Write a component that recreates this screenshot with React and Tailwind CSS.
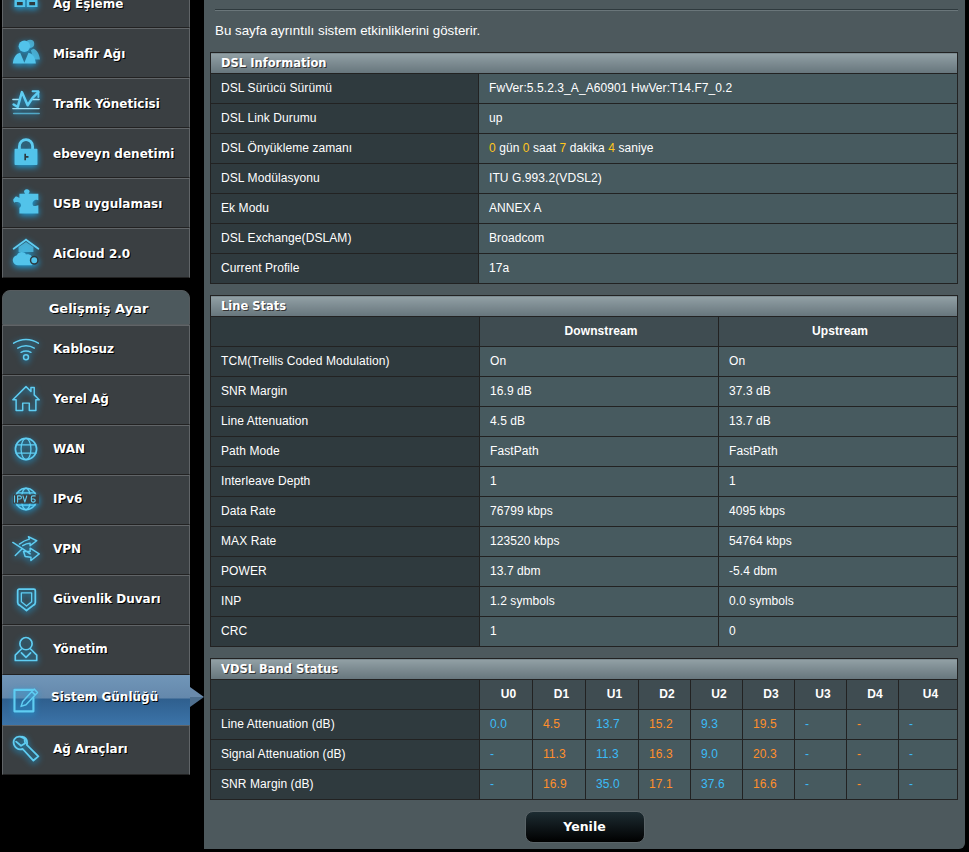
const glow = "shrink-0 drop-shadow-[0_2px_3px_#1b9fdc]";
const S = ({ children, size = 28 }) => (
  <span className="flex w-[28px] justify-center">
    <svg width={size} height={size} viewBox="0 0 34 34" fill="none" stroke="#5fcdf2" strokeWidth="1.8" strokeLinejoin="round" strokeLinecap="round" className={glow}>{children}</svg>
  </span>
);
const F = "#52c3ea";
const icons = {
  map: <S><g fill={F} stroke="none"><path d="M12 2h10v7h-10zM3 14h13v9H3zM18 14h13v9H18z" /><path d="M16 9h2v3h9v2H7v-2h9z" /></g><path d="M6 17h7v4H6zM21 17h7v4h-7z" fill="#2d3a40" stroke="none" /></S>,
  guest: <S><g fill={F} stroke="none"><circle cx="22" cy="7" r="5" opacity=".75" /><path d="M26 13c4 1 7 6 8 13h-8l-3-11z" opacity=".75" /><circle cx="15" cy="10" r="7" /><path d="M1 31c1-8 4-12 9-13l5 12 5-12c5 1 8 5 9 13z" /></g></S>,
  traffic: <S><path d="M1 14h7M24 14h9M1 25h32" stroke="#9fe1f7" strokeWidth="1.6" /><path d="M2 20l5 3 5-18 7 16 6-9 7-7" strokeWidth="3" /><path d="M25 4h7v7" strokeWidth="2.4" /><path d="M2 31h31" strokeWidth="1.8" opacity=".7" /></S>,
  lock: <S><path d="M9 15v-5a8 8 0 0116 0v5" strokeWidth="3.4" /><path d="M4 14h26v18H4z" fill={F} stroke={F} /><path d="M15 19h2v3h3v2h-3v3h-2z" fill="#2d3a40" stroke="none" /></S>,
  puzzle: <S><path fill={F} stroke="none" d="M15 3a4 4 0 016 0c1 1 0 3-1 4h12v8c-2-1-4-1-6 1s-1 6 1 6 3-1 5-1v10H9v-7c1 0 2-2 2-3 0-3-3-4-4-4-2 0-3 0-4 1-2-2-2-5 0-6 1-2 3-2 4-1l2 1V7h7c-1-1-2-3-1-4z" /></S>,
  cloud: <S><path d="M17 2L2 13M17 2l15 11" strokeWidth="2.2" /><path d="M8 11l9-6 9 6v6H8z" fill={F} stroke="none" opacity=".75" /><path fill={F} stroke="none" d="M8 33a6 6 0 01-2-12c2-5 9-5 11-1 5-1 8 2 8 6a4 4 0 01-1 7z" /><circle cx="27" cy="27" r="4.5" fill={F} stroke="#2d3a40" /></S>,
  wifi: <S><path d="M2 10c9-6 21-6 30 0M7 16c6-4 14-4 20 0M11 21c4-2 8-2 12 0" /><circle cx="17" cy="27" r="3" /></S>,
  home: <S><path d="M1 18L17 2l6 6V3h4v9l6 6h-4v13h-8v-9h-8v9H5V18z" /></S>,
  globe: <S size={24}><circle cx="17" cy="17" r="15" strokeWidth="2.4" /><ellipse cx="17" cy="17" rx="7" ry="15" /><path d="M3 11h28M3 23h28" /></S>,
  ipv6: <S size={26}><circle cx="17" cy="17" r="14" /><ellipse cx="17" cy="17" rx="6" ry="14" /><path d="M5 9h24M5 25h24" strokeWidth="1.4" /><rect x="0" y="11" width="34" height="12" fill="#3a3f42" stroke="none" /><path d="M2 13v8M6 21v-8h3a2 2 0 010 4H6M13 13l2.5 8 2.5-8M29 13h-3a2 2 0 00-2 2v4a2 2 0 002 2h1a2 2 0 002-2a2 2 0 00-2-2h-3" strokeWidth="1.5" /></S>,
  vpn: <S><path d="M1 9l14 9 7 5M4 25l8-8M9 11c4-3 8-5 12-6l-1-3 10 5-8 6v-3c-3 0-6 1-9 3M14 20h8v-4l11 7-10 8v-4l-7-1z" /></S>,
  shield: <S size={25}><path d="M7 3h20c1 0 2 1 2 2v16c0 2-1 3-3 4l-9 7-9-7c-2-1-3-2-3-4V5c0-1 1-2 2-2z" strokeWidth="2.4" /><path d="M10 8h14v12l-7 6-7-6z" /></S>,
  admin: <S size={26}><circle cx="17" cy="10" r="8" strokeWidth="2.2" /><path d="M11 17L3 25v7h28v-7l-8-8M11 22l6 6 6-6" strokeWidth="2.2" /></S>,
  log: <S><path d="M26 16v16H3V6h22" strokeWidth="2.6" /><path d="M11 26l2-6 14-15 4 4-14 15zM24 8l4 4" /></S>,
  tools: <S><path d="M5 8l6 5 5-3-1-6-5-2C4 1 0 7 3 13c2 4 6 5 10 4l13 14 6-5-14-14c1-5-1-9-6-10" strokeWidth="2.2" /></S>,
};

const Item = ({ icon, label, active, top }) => (
  <div className={active
    ? "relative flex h-[50px] items-center pl-[10px] bg-[linear-gradient(#7196b8_0%,#6488ac_46%,#2f5f8e_48%,#3c74a9_100%)]"
    : "flex h-[50px] items-center border border-[#606467] border-b-[#222] bg-[#3a3f42] pl-[9px]"}>
    <span className="flex w-[41px] justify-start -translate-y-[1px]">{icons[icon]}</span>
    <span className={`font-['DejaVu_Sans',sans-serif] text-[12px] font-bold text-white [text-shadow:1px_1px_0_#000] ${top ? "translate-y-[1px]" : active ? "-translate-y-[3px]" : "-translate-y-[1px]"} ${active ? "-ml-[2px]" : ""}`}>{label}</span>
    {active && <span className="absolute left-full top-[12px] h-[20px] w-[14px] bg-[linear-gradient(#6a8aab_50%,#4f6f8e_50%)] [clip-path:polygon(0_0,100%_50%,0_100%)]" />}
  </div>
);

const Section = ({ title, cols, head, headPad, children }) => (
  <table className="w-[747px] table-fixed border-collapse font-['Liberation_Sans',sans-serif] text-[12px] tracking-[0.08px] text-white">
    <colgroup>{cols.map((w, i) => <col key={i} style={{ width: w }} />)}</colgroup>
    <thead>
      <tr>
        <th colSpan={cols.length} className="h-[21px] border border-[#222] bg-[linear-gradient(#92a0a5,#66757c)] pl-[10px] pt-[1px] text-left font-['DejaVu_Sans',sans-serif] text-[11.5px] font-bold tracking-normal text-white [text-shadow:1px_1px_0_#333]">{title}</th>
      </tr>
      {head && (
        <tr className="h-[30px]">
          <th className="border border-[#222] bg-[#2f3a3e]" />
          {head.map((h) => <th key={h} className={`border border-[#222] bg-[#3f4c51] pb-[2px] font-bold ${headPad}`}>{h}</th>)}
        </tr>
      )}
    </thead>
    <tbody>{children}</tbody>
  </table>
);
const L = ({ children }) => <td className="h-[30px] border border-[#222] bg-[#2f3a3e] pb-[2px] pl-[10px]">{children}</td>;
const V = ({ children, c = "" }) => <td className={`h-[30px] border border-[#222] bg-[#475a5f] pb-[2px] pl-[10px] ${c}`}>{children}</td>;

const Y = ({ children }) => <span className="text-[#ffc61c]">{children}</span>;
const dsl = [
  ["DSL Sürücü Sürümü", "FwVer:5.5.2.3_A_A60901 HwVer:T14.F7_0.2"],
  ["DSL Link Durumu", "up"],
  ["DSL Önyükleme zamanı", <><Y>0</Y> gün <Y>0</Y> saat <Y>7</Y> dakika <Y>4</Y> saniye</>],
  ["DSL Modülasyonu", "ITU G.993.2(VDSL2)"],
  ["Ek Modu", "ANNEX A"],
  ["DSL Exchange(DSLAM)", "Broadcom"],
  ["Current Profile", "17a"],
];
const stats = [
  ["TCM(Trellis Coded Modulation)", "On", "On"],
  ["SNR Margin", "16.9 dB", "37.3 dB"],
  ["Line Attenuation", "4.5 dB", "13.7 dB"],
  ["Path Mode", "FastPath", "FastPath"],
  ["Interleave Depth", "1", "1"],
  ["Data Rate", "76799 kbps", "4095 kbps"],
  ["MAX Rate", "123520 kbps", "54764 kbps"],
  ["POWER", "13.7 dbm", "-5.4 dbm"],
  ["INP", "1.2 symbols", "0.0 symbols"],
  ["CRC", "1", "0"],
];
const bandHead = ["U0", "D1", "U1", "D2", "U2", "D3", "U3", "D4", "U4"];
const bands = [
  ["Line Attenuation (dB)", "0.0", "4.5", "13.7", "15.2", "9.3", "19.5", "-", "-", "-"],
  ["Signal Attenuation (dB)", "-", "11.3", "11.3", "16.3", "9.0", "20.3", "-", "-", "-"],
  ["SNR Margin (dB)", "-", "16.9", "35.0", "17.1", "37.6", "16.6", "-", "-", "-"],
];

export default function App() {
  return (
    <div className="flex h-[852px] w-[969px] overflow-hidden bg-black">
      <aside className="ml-[2px] -mt-[22px] w-[188px] shrink-0">
        <Item top icon="map" label="Ağ Eşleme" />
        <Item top icon="guest" label="Misafir Ağı" />
        <Item top icon="traffic" label="Trafik Yöneticisi" />
        <Item top icon="lock" label="ebeveyn denetimi" />
        <Item top icon="puzzle" label="USB uygulaması" />
        <Item top icon="cloud" label="AiCloud 2.0" />
        <div className="mt-[12px] flex h-[35px] items-center justify-center rounded-t-[8px] border border-[#555b5e] bg-[#4d595d] pl-[5px] pt-[3px] font-['DejaVu_Sans',sans-serif] text-[13px] font-bold text-white [text-shadow:1px_1px_0_#000]">Gelişmiş Ayar</div>
        <Item icon="wifi" label="Kablosuz" />
        <Item icon="home" label="Yerel Ağ" />
        <Item icon="globe" label="WAN" />
        <Item icon="ipv6" label="IPv6" />
        <Item icon="vpn" label="VPN" />
        <Item icon="shield" label="Güvenlik Duvarı" />
        <Item icon="admin" label="Yönetim" />
        <Item icon="log" label="Sistem Günlüğü" active />
        <Item icon="tools" label="Ağ Araçları" />
      </aside>
      <main className="ml-[14px] h-[849px] w-[761px] shrink-0 rounded-br-[6px] bg-[#4d595d] pl-[6px] pt-[9px]">
        <div className="ml-[5px] mr-[7px] h-[2px] border-t border-[#2f3a3e] bg-[#6a767a]" />
        <p className="ml-[5px] mt-[10px] mb-[12px] h-[19px] font-['Liberation_Sans',sans-serif] text-[13.33px] leading-[19px] text-white">Bu sayfa ayrıntılı sistem etkinliklerini gösterir.</p>
        <Section title="DSL Information" cols={[268, 479]}>
          {dsl.map(([a, b]) => <tr key={a}><L>{a}</L><V>{b}</V></tr>)}
        </Section>
        <div className="h-[11px]" />
        <Section title="Line Stats" cols={[269, 239, 239]} head={["Downstream", "Upstream"]} headPad="pl-[4px]">
          {stats.map(([a, b, c]) => <tr key={a}><L>{a}</L><V>{b}</V><V>{c}</V></tr>)}
        </Section>
        <div className="h-[11px]" />
        <Section title="VDSL Band Status" cols={[269, 53, 53, 53, 52, 52, 52, 52, 52, 59]} head={bandHead} headPad="pl-[5px]">
          {bands.map(([a, ...r]) => (
            <tr key={a}>
              <L>{a}</L>
              {r.map((v, i) => <V key={i} c={i % 2 === 0 ? "text-[#3bbcf7]" : "text-[#ff8f2b]"}>{v}</V>)}
            </tr>
          ))}
        </Section>
        <div className="mt-[11px] flex justify-center pr-[6px]">
          <button className="h-[32px] w-[120px] rounded-[8px] border border-[#5a6468] bg-[linear-gradient(#1d2c32,#000)] font-['DejaVu_Sans',sans-serif] text-[12.5px] font-bold text-white">Yenile</button>
        </div>
      </main>
    </div>
  );
}
